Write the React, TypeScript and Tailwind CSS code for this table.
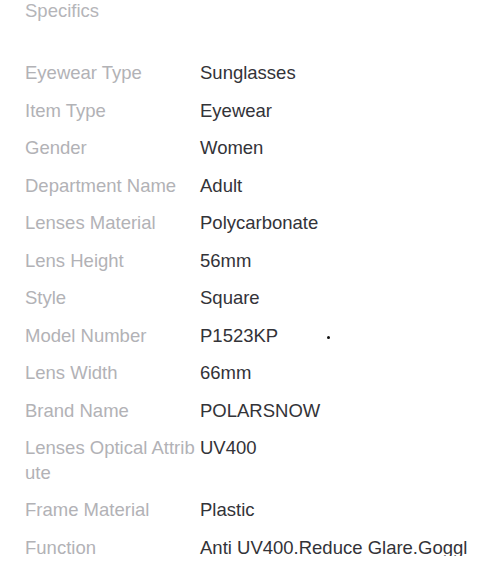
import React from "react";

const rows: { label: React.ReactNode; value: React.ReactNode; dot?: boolean }[] = [
  { label: "Eyewear Type", value: "Sunglasses" },
  { label: "Item Type", value: "Eyewear" },
  { label: "Gender", value: "Women" },
  { label: "Department Name", value: "Adult" },
  { label: "Lenses Material", value: "Polycarbonate" },
  { label: "Lens Height", value: "56mm" },
  { label: "Style", value: "Square" },
  { label: "Model Number", value: "P1523KP", dot: true },
  { label: "Lens Width", value: "66mm" },
  { label: "Brand Name", value: "POLARSNOW" },
  {
    label: (
      <>
        Lenses Optical Attrib
        <br />
        ute
      </>
    ),
    value: "UV400",
  },
  { label: "Frame Material", value: "Plastic" },
  { label: "Function", value: "Anti UV400.Reduce Glare.Goggl" },
];

export default function App() {
  return (
    <div
      className="w-[500px] h-[556px] overflow-hidden bg-white text-[18.5px] leading-[24.5px]"
      style={{ fontFamily: '"Liberation Sans", Arial, sans-serif' }}
    >
      <div className="pl-[25px] mt-[-1px] text-[#b5b5b9]">Specifics</div>
      <div className="mt-[31px] flex flex-col">
        {rows.map((r, i) => (
          <div key={i} className="flex py-[6.5px] pl-[25px]">
            <div className="w-[175px] shrink-0 text-[#b2b2b6] whitespace-nowrap">{r.label}</div>
            <div className="relative w-[272px] text-[#333338] whitespace-nowrap">
              {r.value}
              {r.dot && (
                <span className="absolute left-[127px] top-[12px] w-[3px] h-[3px] rounded-full bg-[#111]" />
              )}
            </div>
          </div>
        ))}
      </div>
    </div>
  );
}
